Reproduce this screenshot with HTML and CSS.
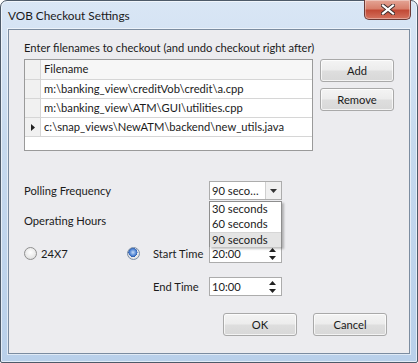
FILE: index.html
```html
<!DOCTYPE html>
<html>
<head>
<meta charset="utf-8">
<link rel="stylesheet" href="styles.css">
</head>
<body>
<div class="window">
  <div class="titlebar">
    <span class="title">VOB Checkout Settings</span>
    <div class="close">
      <svg width="14" height="11" viewBox="0 0 14 11"><path d="M2 1.5 L12 9.5 M12 1.5 L2 9.5" stroke="#3a2a2a" stroke-width="4" stroke-linecap="square"/><path d="M2 1.5 L12 9.5 M12 1.5 L2 9.5" stroke="#ffffff" stroke-width="2.2" stroke-linecap="square"/></svg>
    </div>
  </div>
  <div class="client">
    <div class="intro">Enter filenames to checkout (and undo checkout right after)</div>
    <div class="files">
      <div class="table">
        <div class="trow head"><div class="rh"></div><div class="cell">Filename</div></div>
        <div class="trow"><div class="rh"></div><div class="cell">m:\banking_view\creditVob\credit\a.cpp</div></div>
        <div class="trow"><div class="rh"></div><div class="cell">m:\banking_view\ATM\GUI\utilities.cpp</div></div>
        <div class="trow"><div class="rh"><svg width="4" height="7" viewBox="0 0 4 7"><path d="M0 0 L4 3.5 L0 7 Z" fill="#222"/></svg></div><div class="cell">c:\snap_views\NewATM\backend\new_utils.java</div></div>
      </div>
      <div class="side">
        <div class="btn">Add</div>
        <div class="btn">Remove</div>
      </div>
    </div>
    <div class="form">
      <span class="lbl c-wide">Polling Frequency</span>
      <div class="combo">
        <span class="combo-text">90 seco…</span>
        <span class="combo-arrow"><svg width="7" height="4" viewBox="0 0 7 4"><path d="M0 0 L7 0 L3.5 4 Z" fill="#333"/></svg></span>
        <div class="droplist">
          <div class="item">30 seconds</div>
          <div class="item">60 seconds</div>
          <div class="item sel">90 seconds</div>
        </div>
      </div>
      <span class="lbl c-all ophours">Operating Hours</span>
      <span class="radio-wrap"><span class="radio"></span><span class="lbl">24X7</span></span>
      <span class="radio checked"></span>
      <span class="lbl">Start Time</span>
      <div class="spin"><span>20:00</span><span class="arrows"><svg width="7" height="14" viewBox="0 0 7 14"><path d="M3.5 1 L7 5 L0 5 Z M0 9 L7 9 L3.5 13 Z" fill="#222"/></svg></span></div>
      <span class="lbl c3">End Time</span>
      <div class="spin"><span>10:00</span><span class="arrows"><svg width="7" height="14" viewBox="0 0 7 14"><path d="M3.5 1 L7 5 L0 5 Z M0 9 L7 9 L3.5 13 Z" fill="#222"/></svg></span></div>
    </div>
    <div class="actions">
      <div class="btn">OK</div>
      <div class="btn">Cancel</div>
    </div>
  </div>
</div>
</body>
</html>
```
FILE: styles.css
```css
* { box-sizing: border-box; }
html, body { margin: 0; padding: 0; }
body {
  width: 418px;
  height: 363px;
  background: #ffffff;
  font-family: Lato, "Open Sans", sans-serif;
  font-size: 11.2px;
  color: #1b1b1b;
  overflow: hidden;
}
.window {
  width: 418px;
  height: 363px;
  border: 1px solid #4d5a69;
  border-radius: 7px 7px 2px 2px;
  background: linear-gradient(180deg, #d9e6f5 0%, #c6d9ee 40%, #b9d0ea 100%);
  padding: 0 7px 8px 7px;
  display: flex;
  flex-direction: column;
  box-shadow: inset 0 0 0 1px rgba(255,255,255,0.6);
}
.titlebar {
  height: 28px;
  display: flex;
  align-items: center;
  position: relative;
}
.title {
  font-size: 11.8px;
  color: #1a1a1a;
  padding-top: 1px;
}
.close {
  position: absolute;
  right: -1px;
  top: -1px;
  width: 47px;
  height: 20px;
  border: 1px solid #6b3a36;
  border-top: none;
  border-radius: 0 0 5px 5px;
  background: linear-gradient(180deg, #e4a596 0%, #d8806c 45%, #c24a36 55%, #d4725e 100%);
  display: flex;
  align-items: center;
  justify-content: center;
  box-shadow: inset 0 0 0 1px rgba(255,255,255,0.35);
}
.client {
  flex: 1;
  border: 1px solid #7b8ca0;
  background: #ececef;
  padding: 10px 0 0 15px;
  display: flex;
  flex-direction: column;
  box-shadow: 0 0 0 1px rgba(255,255,255,0.55);
}
.intro {
  line-height: 16px;
  height: 16px;
}
.files {
  margin-top: 3px;
  display: flex;
  gap: 7px;
}
.table {
  width: 289px;
  height: 92px;
  border: 1px solid #9a9a9a;
  background: #ffffff;
}
.trow {
  display: flex;
  height: 19px;
  border-bottom: 1px solid #d6d6d6;
}
.trow.head {
  height: 20px;
  background: #f7f7f7;
}
.rh {
  width: 16px;
  flex: none;
  border-right: 1px solid #d6d6d6;
  background: #f1f1f1;
  display: flex;
  align-items: center;
  justify-content: center;
}
.cell {
  padding-left: 3px;
  line-height: 18px;
  white-space: nowrap;
}
.side {
  display: flex;
  flex-direction: column;
  gap: 6px;
}
.btn {
  width: 74px;
  height: 23px;
  border: 1px solid #a9a9a9;
  border-radius: 3px;
  background: linear-gradient(180deg, #f4f4f4 0%, #ececec 48%, #dedede 52%, #d8d8d8 100%);
  box-shadow: inset 0 0 0 1px rgba(255,255,255,0.7);
  display: flex;
  align-items: center;
  justify-content: center;
  color: #1b1b1b;
}
.form {
  margin-top: 30px;
  display: grid;
  grid-template-columns: 103px 26px 56px 73px;
  grid-template-rows: 19px 16px 19px 19px;
  row-gap: 14px;
  align-items: center;
}
.lbl { line-height: 16px; white-space: nowrap; }
.c-wide { grid-column: 1 / 4; }
.c-all { grid-column: 1 / 5; }
.c3 { grid-column: 3; }
.ophours { margin-top: -2px; }
.combo {
  position: relative;
  height: 19px;
  border: 1px solid #acacac;
  background: #ffffff;
  display: flex;
}
.combo-text {
  flex: 1;
  padding-left: 2px;
  line-height: 17px;
}
.combo-arrow {
  width: 16px;
  border-left: 1px solid #cfcfcf;
  background: #f0f0f0;
  display: flex;
  align-items: center;
  justify-content: center;
}
.droplist {
  position: absolute;
  left: -1px;
  top: 19px;
  width: 73px;
  height: 46px;
  background: #ffffff;
  border: 1px solid #8e8e8e;
  box-shadow: 2px 2px 2px rgba(0,0,0,0.25);
  z-index: 5;
}
.item {
  height: 15px;
  line-height: 14px;
  padding-left: 2px;
}
.item.sel {
  background: #e4e4e4;
  border-top: 1px solid #d6d6d6;
  line-height: 13px;
}
.radio-wrap {
  display: flex;
  align-items: center;
  gap: 4px;
}
.radio {
  width: 13px;
  height: 13px;
  border-radius: 50%;
  border: 1px solid #8f8f8f;
  background: radial-gradient(circle at 50% 40%, #ffffff 0%, #e8e8e8 60%, #cfcfcf 100%);
  display: inline-block;
}
.radio.checked {
  background:
    radial-gradient(circle at 45% 40%, #c6dcf8 0%, #4a7fd0 38%, #2c5aa8 50%, transparent 52%),
    radial-gradient(circle at 50% 40%, #ffffff 0%, #e8e8e8 60%, #cfcfcf 100%);
  border-color: #7b8ea6;
}
.spin {
  height: 19px;
  border: 1px solid #acacac;
  background: #ffffff;
  display: flex;
  align-items: center;
  justify-content: space-between;
  padding-left: 2px;
  padding-right: 5px;
}
.arrows { display: flex; }
.actions {
  margin-top: 17px;
  display: flex;
  justify-content: flex-end;
  gap: 16px;
  padding-right: 22px;
}
.actions .btn { height: 23px; }
```
